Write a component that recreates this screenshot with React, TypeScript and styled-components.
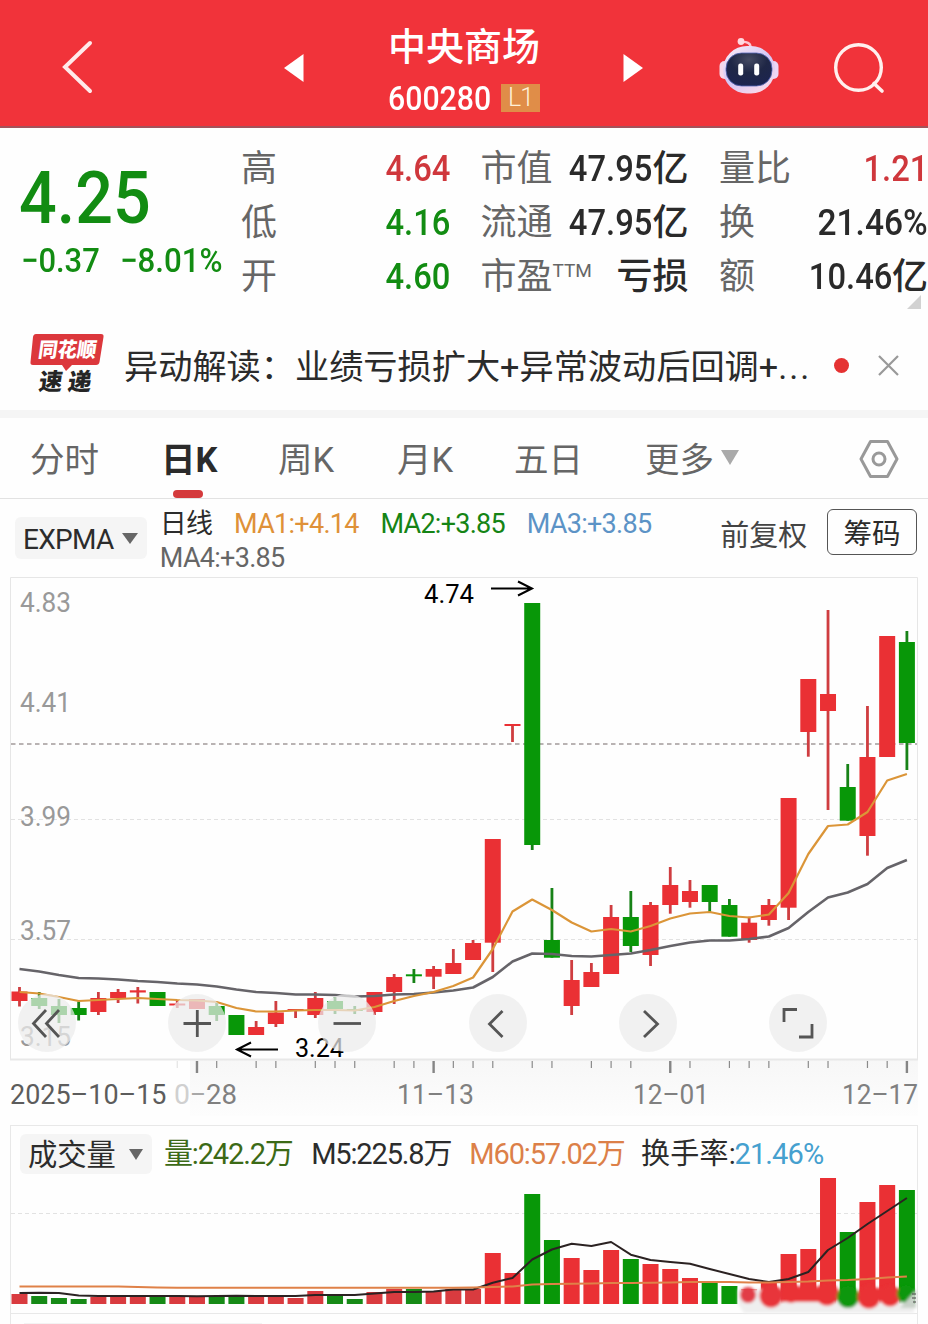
import React from 'react';
import styled, { createGlobalStyle, css } from 'styled-components';

const RED = '#ea3034';
const GREEN = '#089708';
const FONT = `Roboto, 'Noto Sans CJK SC', sans-serif`;

const Global = createGlobalStyle`
  * { box-sizing: border-box; }
  body { margin: 0; background: #fefefe; font-family: ${FONT}; color: #2c2c2c; }
`;

const Page = styled.main`
  width: 928px;
  height: 1324px;
  overflow: hidden;
  display: flex;
  flex-direction: column;
  background: #fefefe;
`;

/* digits set narrower than the family's own width */
const Narrow = styled.span<{ $k: number; $from?: 'left' | 'right' }>`
  display: inline-block;
  letter-spacing: 0;
  transform: scaleX(${(p) => p.$k});
  transform-origin: ${(p) => p.$from || 'left'} center;
`;

/* ---------- header ---------- */
const Header = styled.header`
  flex: none;
  height: 128px;
  background: #f1333a;
  border-bottom: 2px solid #a4525a;
  display: grid;
  grid-template-columns: 284px 20px 319px 20px 76px 59px 56px 94px;
  align-items: center;
  padding-top: 9px;
  svg { display: block; }
`;
const BackSlot = styled.div`
  padding: 0 0 2px 61px;
`;
const SearchSlot = styled.div`
  grid-column: 8;
`;
const RobotSlot = styled.div`
  grid-column: 6;
  padding-bottom: 4px;
`;
const TitleBlock = styled.div`
  padding: 13px 0 0 84px;
  display: flex;
  flex-direction: column;
`;
const StockName = styled.h1`
  margin: 0;
  font: 500 38px/48px ${FONT};
  color: #fff;
`;
const CodeLine = styled.div`
  display: flex;
  align-items: center;
  gap: 10px;
  height: 54px;
`;
const Code = styled.span`
  font: 500 34px/40px ${FONT};
  color: #fff;
  width: 103px;
  white-space: nowrap;
`;
const LevelTag = styled.span`
  width: 39px;
  height: 28px;
  background: #e08d48;
  color: #fff0d8;
  font: 300 25px/28px ${FONT};
  letter-spacing: -1px;
  text-align: center;
`;

/* ---------- quote ---------- */
const Quote = styled.section`
  flex: none;
  height: 196px;
  display: grid;
  grid-template-columns: 241px 687px;
  position: relative;
`;
const PriceBlock = styled.div`
  padding: 31px 0 0 19px;
  color: #128c12;
`;
const Price = styled.div`
  font: 500 73px/78px ${FONT};
`;
const Change = styled.div`
  display: grid;
  grid-template-columns: 99px auto;
  font: 500 34px/44px ${FONT};
  padding-left: 2px;
  margin-top: 1px;
  white-space: nowrap;
`;
const Stats = styled.dl`
  margin: 0;
  padding-top: 14px;
  display: grid;
  grid-template-columns: 209px 208px 209px;
  grid-template-rows: repeat(3, 54px);
  column-gap: 30.5px;
`;
const Stat = styled.div`
  display: flex;
  justify-content: space-between;
  align-items: center;
  white-space: nowrap;
`;
const StatLabel = styled.dt`
  font: 400 36px/54px ${FONT};
  color: #666;
  width: 74px;
  sup { font-size: 19px; font-weight: 400; line-height: 0; vertical-align: 12px; }
`;
const StatValue = styled.dd<{ $tone?: string }>`
  margin: 0;
  font: 500 37px/54px ${FONT};
  color: ${(p) => p.$tone || '#2a2a2a'};
  i { font-style: normal; font-size: 36px; }
`;
const Corner = styled.span`
  position: absolute;
  right: 7px;
  bottom: 15px;
  border-left: 14px solid transparent;
  border-bottom: 14px solid #d2d2d2;
`;

/* ---------- news ---------- */
const News = styled.section`
  flex: none;
  height: 94px;
  padding: 3px 29px 7px 29px;
  border-bottom: 8px solid #f5f5f5;
  display: flex;
  align-items: center;
  svg { display: block; flex: none; }
`;
const LogoSlot = styled.div`
  flex: none;
  padding-bottom: 4px;
`;
const NewsText = styled.p`
  margin: 4px 0 0 20px;
  width: 686px;
  font: 400 34.2px/50px ${FONT};
  color: #2b2b2b;
  white-space: nowrap;
  span { letter-spacing: 2px; }
`;
const Dot = styled.span`
  width: 15px;
  height: 15px;
  margin: 0 29px 0 24px;
  border-radius: 50%;
  background: #e53232;
  flex: none;
`;

/* ---------- tabs ---------- */
const Tabs = styled.nav`
  flex: none;
  height: 81px;
  padding: 0 30px 0 30px;
  border-bottom: 1px solid #e2e2e2;
  display: grid;
  grid-template-columns: 131px 117px 119px 117px 131px 213.5px 40px;
  align-items: stretch;
`;
const Tab = styled.button<{ $on?: boolean }>`
  border: 0;
  padding: 3px 0 0;
  background: none;
  display: flex;
  align-items: center;
  gap: 7px;
  position: relative;
  font: ${(p) => (p.$on ? 700 : 400)} 34.5px/50px ${FONT};
  color: ${(p) => (p.$on ? '#2b2b2b' : '#666')};
  ${(p) =>
    p.$on &&
    css`
      &::after {
        content: '';
        position: absolute;
        left: 12px;
        bottom: 0;
        width: 30px;
        height: 8px;
        border-radius: 4px;
        background: #d43a3c;
      }
    `}
`;
const Caret = styled.span<{ $w: number; $h: number; $c: string; $lift?: number }>`
  border: ${(p) => p.$w / 2}px solid transparent;
  border-bottom: 0;
  border-top: ${(p) => p.$h}px solid ${(p) => p.$c};
  margin-bottom: ${(p) => p.$lift || 0}px;
  flex: none;
`;
const GearSlot = styled.div`
  display: flex;
  align-items: center;
  padding-top: 2px;
`;

/* ---------- indicator bar ---------- */
const IndicatorBar = styled.section`
  flex: none;
  height: 78px;
  display: flex;
  padding: 0 11px 0 15px;
`;
const Picker = styled.button<{ $w: number; $h: number }>`
  flex: none;
  border: 0;
  border-radius: 6px;
  background: #f5f5f5;
  width: ${(p) => p.$w}px;
  height: ${(p) => p.$h}px;
  padding: 2px 9px 0 8px;
  display: flex;
  align-items: center;
  justify-content: space-between;
  white-space: nowrap;
  font: 400 28px/40px ${FONT};
  color: #2c2c2c;
`;
const PickerLatin = styled.span`
  letter-spacing: -0.7px;
  padding-top: 1px;
`;
const PickerHan = styled.span`
  font-size: 29.3px;
`;
const PickerSlot = styled.div`
  padding-top: 18px;
  width: 145px;
`;
const Legend = styled.div`
  width: 561px;
  padding-top: 8px;
  display: flex;
  flex-wrap: wrap;
  align-content: flex-start;
  column-gap: 21.7px;
`;
const LegendItem = styled.span<{ $c: string }>`
  font: 400 27px/34px ${FONT};
  letter-spacing: -0.72px;
  color: ${(p) => p.$c};
  white-space: nowrap;
`;
const Adjust = styled.span`
  font: 400 29px/44px ${FONT};
  color: #444;
  width: 107px;
  padding-top: 15px;
`;
const ChipButton = styled.button`
  width: 90px;
  height: 46px;
  margin-top: 10px;
  border: 1px solid #555;
  border-radius: 6px;
  background: none;
  font: 400 28.5px/42px ${FONT};
  color: #2a2a2a;
  padding: 4px 0 0;
`;

/* ---------- charts ---------- */
const ChartSection = styled.section`
  flex: none;
  position: relative;
  height: 548px;
  svg { display: block; }
`;
const Controls = styled.div`
  position: absolute;
  left: 18px;
  top: 417px;
  display: flex;
  gap: 92.2px;
`;
const RoundButton = styled.button`
  width: 58px;
  height: 58px;
  border: 0;
  padding: 0;
  border-radius: 50%;
  background: rgba(235, 235, 235, 0.72);
`;
const VolumeSection = styled.section`
  flex: none;
  height: 199px;
  display: flex;
  flex-direction: column;
  svg { display: block; }
`;
const VolumeHead = styled.div`
  height: 49px;
  margin: 0 10px;
  border: 1px solid #e8e8e8;
  border-bottom: 0;
  padding: 8px 0 0 9px;
  display: flex;
`;
const VolumeItem = styled.span<{ $c: string; $ml: number }>`
  margin-left: ${(p) => p.$ml}px;
  font: 400 29px/41px ${FONT};
  letter-spacing: -1.15px;
  color: ${(p) => p.$c};
  white-space: nowrap;
  b { font-weight: 400; color: #45a0cf; letter-spacing: -0.9px; }
  i { font-style: normal; letter-spacing: 0.2px; }
`;

/* index, open/close band and high/low band, in chart units */
type Candle = [dir: 'r' | 'g', top: number, bottom: number, high: number, low: number];
const candles: Candle[] = [
  ['r', 991.5, 1001, 987, 1006.5], ['g', 998, 1006, 992, 1009], ['g', 1006, 1015, 999, 1023],
  ['g', 1008, 1015, 1001.5, 1020.5], ['r', 998, 1012, 992, 1015], ['r', 992, 998, 989, 1003],
  ['r', 990.3, 992.5, 987, 1003.5], ['g', 992, 1006, 992, 1006], ['r', 1003.5, 1005.5, 1000, 1008],
  ['r', 999, 1009, 999, 1009], ['g', 1006, 1015, 1003, 1021], ['g', 1015, 1035, 1015, 1035],
  ['r', 1027, 1035, 1021, 1035], ['r', 1012.5, 1024, 1001, 1027], ['r', 1009, 1011, 1009, 1018],
  ['r', 998, 1015, 992, 1018], ['g', 1001, 1009, 997, 1014], ['g', 1009, 1011, 1006, 1014],
  ['r', 992, 1012, 992, 1015], ['r', 977, 992, 974, 1004], ['g', 974.3, 976.3, 969, 983],
  ['r', 969, 976.7, 966, 989], ['r', 963, 974, 949, 974], ['r', 943, 960, 940, 960],
  ['r', 839, 942.7, 839, 972], ['r', 724, 726, 724, 742], ['g', 603, 845, 603, 850],
  ['g', 940, 957.7, 888, 957.7], ['r', 980, 1006, 960, 1015], ['r', 972, 987, 963, 987],
  ['r', 917, 974, 905, 974], ['g', 917, 946, 891, 952], ['r', 905, 955, 902, 966],
  ['r', 885, 905, 867, 913.7], ['r', 891, 902, 880, 907.7], ['g', 885, 902, 885, 912],
  ['g', 905, 936.7, 899, 936.7], ['r', 922.7, 940, 916.7, 942.7], ['r', 905, 920, 899, 925.7],
  ['r', 798, 907.7, 798, 920], ['r', 679, 732, 679, 756.7], ['r', 694, 711, 610, 810],
  ['g', 787, 820.7, 764, 820.7], ['r', 757, 836, 706, 855.7], ['r', 636, 757, 636, 757],
  ['g', 642, 743, 631, 770],
];
const maFast = [992, 993.5, 997, 1001, 1000, 999, 998, 999, 1000, 1000.5, 1002, 1008, 1011.5, 1011.5, 1010.5, 1010, 1010, 1010.5, 1007, 1001, 996, 992, 986, 977.5, 949, 911.5, 899.5, 910, 922.5, 931.5, 929, 931.5, 926, 918.5, 913.5, 912, 916, 917.5, 914.5, 893, 854, 826, 824.5, 812, 780.5, 774];
const maSlow = [969, 971.5, 975, 978, 978.5, 979.5, 981, 982, 983.5, 984.5, 986.5, 989.5, 992, 993, 994.5, 994.5, 995, 996.5, 996, 994.5, 994, 992.5, 990.5, 987.5, 977, 961.5, 953.5, 954, 956, 956.5, 955, 953.5, 950, 946, 942.5, 940.5, 940.5, 939, 936.5, 928, 912, 897.5, 892.5, 884, 868, 860];
const volTops = [1294, 1296, 1298, 1299, 1297, 1297, 1297, 1296, 1297, 1297, 1297, 1295, 1297, 1297, 1298, 1291, 1295, 1299, 1292, 1289, 1289, 1291, 1289, 1289, 1253, 1273, 1194, 1240, 1258, 1270, 1250, 1259, 1264, 1269, 1278, 1282, 1286, 1289, 1282, 1254, 1249, 1178, 1232, 1202, 1185, 1190];
const volM5 = [1293, 1292.7, 1293, 1295.5, 1296, 1296, 1296, 1296, 1296, 1296.3, 1296, 1295.7, 1296, 1296, 1296, 1295, 1295, 1295, 1293.5, 1292, 1292, 1291.5, 1289.5, 1289.5, 1282.7, 1278, 1259.5, 1249.5, 1243.7, 1246, 1242, 1254.7, 1260, 1262, 1263.7, 1269, 1274, 1279, 1282, 1279, 1272, 1250, 1238, 1224, 1211, 1198];
const volM60 = [1286.5, 1286.5, 1286.5, 1286.5, 1286.5, 1286.5, 1287, 1287.5, 1287.7, 1287.7, 1287.7, 1287.7, 1287.7, 1287.7, 1287.7, 1287.7, 1287.7, 1287.7, 1287.7, 1287.7, 1287.7, 1287.7, 1287.7, 1287.5, 1287, 1286.5, 1284.5, 1284, 1283.7, 1283.5, 1283, 1283, 1282.7, 1282.5, 1282, 1282, 1282, 1282.5, 1282.5, 1282, 1281.5, 1280.5, 1280, 1279, 1277.5, 1276.5];

const cx = (i: number) => 19.5 + 19.72 * i;
const toPoints = (ys: number[]) => ys.map((y, i) => `${cx(i).toFixed(1)},${y}`).join(' ');

const priceLabels: [string, number][] = [['4.83', 611.5], ['4.41', 711.5], ['3.99', 825.5], ['3.57', 939.5], ['3.15', 1046]];
const ticks = [8, 10, 12, 13, 15, 16, 17, 19, 20, 22, 23, 24, 26, 27, 29, 30, 31, 34, 36, 37, 38, 40, 41, 43, 44];
const majorTicks = [9, 21, 33, 45];

const Fit = ({ x, y, w, size = 28, fill = '#808080', children }: { x: number; y: number; w: number; size?: number; fill?: string; children: string }) => (
  <text x={x} y={y} textLength={w} lengthAdjust="spacingAndGlyphs" fontSize={size} fill={fill} fontFamily="Roboto, sans-serif">
    {children}
  </text>
);

const PriceChart = () => (
  <svg width="928" height="548" viewBox="0 577 928 548">
    <defs>
      <linearGradient id="axisShade" x1="0" y1="0" x2="0" y2="1">
        <stop offset="0" stopColor="#f7f7f7" />
        <stop offset="1" stopColor="#fdfdfd" />
      </linearGradient>
    </defs>
    <rect x="190" y="1060" width="728" height="56" fill="url(#axisShade)" />
    <path d="M10.5 1059.5V577.5H917.5V1059.5" fill="none" stroke="#e6e6e6" />
    <path d="M10 1059.5H918" stroke="#e8e8e8" strokeWidth="2" />
    <path d="M11 819.5H917M11 939.5H917" stroke="#e2e2e2" strokeDasharray="4 3" />
    {priceLabels.map(([t, y]) => (
      <Fit key={t} x={20} y={y} w={51} fill="#999">{t}</Fit>
    ))}
    <path d="M11 744H917" stroke="#a39a9a" strokeWidth="1.4" strokeDasharray="4.5 3.5" />
    {candles.map(([d, t, b, h, l], i) => (
      <g key={i} fill={d === 'r' ? RED : GREEN}>
        <rect x={cx(i) - 1.4} y={h} width="2.8" height={l - h} fill={d === 'r' ? '#cf3d40' : '#178217'} />
        <rect x={cx(i) - 8} y={t} width="16" height={b - t} />
      </g>
    ))}
    <polyline points={toPoints(maSlow)} fill="none" stroke="#666469" strokeWidth="2.6" strokeLinejoin="round" />
    <polyline points={toPoints(maFast)} fill="none" stroke="#db9538" strokeWidth="2.2" strokeLinejoin="round" />
    <Fit x={424} y={603} w={50} size={26} fill="#000">4.74</Fit>
    <path d="M491 588.5H532M518 581.5L532 588.5L518 595.5" fill="none" stroke="#000" strokeWidth="2" />
    <Fit x={295} y={1057} w={49} size={26} fill="#000">3.24</Fit>
    <path d="M278 1049.5H237M251 1042.5L237 1049.5L251 1056.5" fill="none" stroke="#000" strokeWidth="2" />
    {ticks.map((i) => (
      <path key={i} d={`M${cx(i)} 1061V1068`} stroke={i === 8 ? '#e4e4e4' : '#8a8a8a'} strokeWidth="1.2" />
    ))}
    {majorTicks.map((i) => (
      <path key={i} d={`M${cx(i)} 1061V1073`} stroke="#858585" strokeWidth="2.4" />
    ))}
    <Fit x={10} y={1104} w={156.5} fill="#5c5c5c">2025–10–15</Fit>
    <Fit x={174} y={1104} w={16} fill="#d0d0d0">0</Fit>
    <Fit x={190} y={1104} w={16} fill="#a8a8a8">–</Fit>
    <Fit x={206} y={1104} w={31}>28</Fit>
    <Fit x={397} y={1104} w={77}>11–13</Fit>
    <Fit x={633} y={1104} w={76}>12–01</Fit>
    <Fit x={842} y={1104} w={76}>12–17</Fit>
  </svg>
);

const smudges: [number, number, number, string][] = [
  [748, 1295, 8, '#e23c46'], [771, 1296, 11.5, '#e8353a'], [791, 1293, 10, RED], [808, 1292, 10, RED], [827, 1294, 11.5, RED],
  [848, 1297, 11, GREEN], [869, 1297, 11.5, RED], [890, 1296, 10.5, RED], [906, 1294, 9, GREEN],
];

const VolumeChart = () => (
  <svg width="928" height="150" viewBox="0 1174 928 150">
    <defs>
      <filter id="soft" x="-20%" y="-80%" width="140%" height="260%">
        <feGaussianBlur stdDeviation="1.6" />
      </filter>
    </defs>
    <path d="M10.5 1174V1324M917.5 1174V1324M10 1313.5H918" stroke="#e8e8e8" />
    <path d="M11 1213.5H917" stroke="#e2e2e2" strokeDasharray="4 3" />
    {volTops.map((t, i) => (
      <rect key={i} x={cx(i) - 8} y={t} width="16" height={1304 - t} fill={candles[i][0] === 'r' ? (i < 24 ? '#d93b3f' : RED) : (i < 24 ? '#168a16' : GREEN)} />
    ))}
    <g filter="url(#soft)">
      <path d="M738 1289H762V1302H914V1313H744L738 1304Z" fill="#efefef" />
      <path d="M783 1288H836V1302H783Z" fill={RED} />
      <path d="M862 1288H898V1299H862Z" fill={RED} />
      {smudges.map(([x, y, r, c]) => (
        <ellipse key={x} cx={x} cy={y} rx={r} ry={r} fill={c} />
      ))}
      <path d="M916 1290V1308H900Z" fill="#c9d2c9" />
    </g>
    <path d="M912 1294h4M912 1298h4M913 1302h3" stroke="#444" strokeWidth="1" />
    <polyline points={toPoints(volM5)} fill="none" stroke="#2b2222" strokeWidth="2" strokeLinejoin="round" />
    <polyline points={toPoints(volM60)} fill="none" stroke="#df8148" strokeWidth="2" strokeLinejoin="round" />
    <rect x="24" y="1323" width="238" height="1" fill="#f3f3f3" />
  </svg>
);

const Robot = () => (
  <svg width="60" height="58" viewBox="0 0 60 58">
    <defs>
      <linearGradient id="shell" x1="0" y1="0" x2="0.7" y2="1">
        <stop offset="0" stopColor="#fff0f6" />
        <stop offset="0.55" stopColor="#d3c6f5" />
        <stop offset="1" stopColor="#f9d9ea" />
      </linearGradient>
      <radialGradient id="visor" cx="0.5" cy="0.2" r="0.8">
        <stop offset="0" stopColor="#454b63" />
        <stop offset="0.5" stopColor="#1f2746" />
        <stop offset="1" stopColor="#1c2450" />
      </radialGradient>
    </defs>
    <path d="M31.500 10C31.500 6 28 4.500 22 5" fill="none" stroke="#ffc4d0" strokeWidth="2.400" />
    <circle cx="22" cy="4.500" r="3.400" fill="#ffd9e0" />
    <rect x="0.500" y="24" width="10" height="18" rx="5" fill="#f6d8ea" />
    <rect x="49.500" y="24" width="10" height="18" rx="5" fill="#ecd6f6" />
    <rect x="4" y="9" width="52" height="47.500" rx="24" fill="url(#shell)" />
    <rect x="7" y="16" width="46" height="33" rx="15.500" fill="url(#visor)" stroke="#5468b8" strokeWidth="0.800" />
    <rect x="19.200" y="26.500" width="5" height="12" rx="2.200" fill="#fff" />
    <rect x="35.200" y="26.500" width="5" height="12" rx="2.200" fill="#fff" />
  </svg>
);

const ThsLogo = () => (
  <svg width="75" height="62" viewBox="0 0 75 62" overflow="visible">
    <path d="M7 2H72Q75 2 74.500 5L70.500 30Q70 33 67 33H43L37 39L33 33H4Q1 33 1.500 30L4 5Q4.500 2 7 2Z" fill="#dc373c" />
    <g fontFamily="'Noto Sans CJK SC', sans-serif" fontWeight="900">
      <text transform="translate(8.500 25) skewX(-8)" fontSize="20.500" textLength="58" lengthAdjust="spacingAndGlyphs" fill="#fff">同花顺</text>
      <text transform="translate(9 58) skewX(-8)" fontSize="23.500" fill="#252525">速</text>
      <text transform="translate(38 58) skewX(-8)" fontSize="23.500" fill="#252525">递</text>
    </g>
  </svg>
);

const strokes = { fill: 'none', stroke: '#555', strokeWidth: 2.8 } as const;
const controls: [string, React.ReactNode][] = [
  ['快退', <path key="p" d="M28 16L15.500 29.500L28 43M41 16L28.500 29.500L41 43" {...strokes} />],
  ['放大', <path key="p" d="M15.500 29.500H43M29.300 16V43" {...strokes} />],
  ['缩小', <path key="p" d="M15.500 29.500H43" {...strokes} />],
  ['左移', <path key="p" d="M33.500 17L20.500 30L33.500 43" {...strokes} />],
  ['右移', <path key="p" d="M25 17L38.500 30L25 43" {...strokes} />],
  ['全屏', <path key="p" d="M15 28V15.500H28M43 30V43H30" {...strokes} />],
];

const num = (text: string, k = 0.885) => <Narrow $k={k} $from="right">{text}</Narrow>;
const stats: { label: React.ReactNode; value: React.ReactNode; tone?: string }[] = [
  { label: '高', value: num('4.64'), tone: '#cf373c' },
  { label: '市值', value: <>{num('47.95')}<i>亿</i></> },
  { label: '量比', value: num('1.21'), tone: '#cf373c' },
  { label: '低', value: num('4.16'), tone: '#128c12' },
  { label: '流通', value: <>{num('47.95')}<i>亿</i></> },
  { label: '换', value: num('21.46%', 0.905) },
  { label: '开', value: num('4.60'), tone: '#128c12' },
  { label: <>市盈<sup>TTM</sup></>, value: <i>亏损</i> },
  { label: '额', value: <>{num('10.46')}<i>亿</i></> },
];

export default function App() {
  return (
    <Page>
      <Global />
      <Header>
        <BackSlot>
          <svg width="34" height="54" viewBox="0 0 34 54"><path d="M29 3L4 27L29 51" fill="none" stroke="#ffeaea" strokeWidth="4" strokeLinecap="round" /></svg>
        </BackSlot>
        <svg width="20" height="30" viewBox="0 0 20 30"><path d="M19.500 1V29L0 15Z" fill="#fff" /></svg>
        <TitleBlock>
          <StockName>中央商场</StockName>
          <CodeLine>
            <Code><Narrow $k={0.89}>600280</Narrow></Code>
            <LevelTag>L1</LevelTag>
          </CodeLine>
        </TitleBlock>
        <svg width="20" height="30" viewBox="0 0 20 30"><path d="M0.500 1V29L20 15Z" fill="#fff" /></svg>
        <RobotSlot><Robot /></RobotSlot>
        <SearchSlot>
          <svg width="52" height="52" viewBox="0 0 52 52">
            <circle cx="24.500" cy="25.500" r="22.800" fill="none" stroke="#fff0ee" strokeWidth="3.400" />
            <path d="M40 41.500L48 49" stroke="#fff0ee" strokeWidth="3.600" strokeLinecap="round" />
          </svg>
        </SearchSlot>
      </Header>

      <Quote>
        <PriceBlock>
          <Price><Narrow $k={0.91}>4.25</Narrow></Price>
          <Change>
            <Narrow $k={0.91}>−0.37</Narrow>
            <Narrow $k={0.92}>−8.01%</Narrow>
          </Change>
        </PriceBlock>
        <Stats>
          {stats.map((s, i) => (
            <Stat key={i}>
              <StatLabel>{s.label}</StatLabel>
              <StatValue $tone={s.tone}>{s.value}</StatValue>
            </Stat>
          ))}
        </Stats>
        <Corner />
      </Quote>

      <News>
        <LogoSlot><ThsLogo /></LogoSlot>
        <NewsText>异动解读：业绩亏损扩大+异常波动后回调+<span>...</span></NewsText>
        <Dot />
        <svg width="21" height="21" viewBox="0 0 21 21"><path d="M1 1L20 20M20 1L1 20" stroke="#999" strokeWidth="2.200" /></svg>
      </News>

      <Tabs>
        <Tab>分时</Tab>
        <Tab $on>日K</Tab>
        <Tab>周K</Tab>
        <Tab>月K</Tab>
        <Tab>五日</Tab>
        <Tab>更多<Caret $w={19} $h={15} $c="#aaa" $lift={5} /></Tab>
        <GearSlot>
          <svg width="40" height="40" viewBox="0 0 40 40" fill="none" stroke="#999" strokeWidth="3">
            <path d="M11.500 2.500H28.500L38 20L28.500 37.500H11.500L2 20Z" strokeLinejoin="round" />
            <circle cx="20" cy="20" r="6" />
          </svg>
        </GearSlot>
      </Tabs>

      <IndicatorBar>
        <PickerSlot>
          <Picker $w={132} $h={42}><PickerLatin>EXPMA</PickerLatin><Caret $w={16} $h={11} $c="#666" $lift={2} /></Picker>
        </PickerSlot>
        <Legend>
          <LegendItem $c="#2c2c2c">日线</LegendItem>
          <LegendItem $c="#df9138">MA1:+4.14</LegendItem>
          <LegendItem $c="#158415">MA2:+3.85</LegendItem>
          <LegendItem $c="#5c93c6">MA3:+3.85</LegendItem>
          <LegendItem $c="#666">MA4:+3.85</LegendItem>
        </Legend>
        <Adjust>前复权</Adjust>
        <ChipButton>筹码</ChipButton>
      </IndicatorBar>

      <ChartSection>
        <PriceChart />
        <Controls>
          {controls.map(([name, icon]) => (
            <RoundButton key={name} aria-label={name}>
              <svg width="58" height="58" viewBox="0 0 58 58">{icon}</svg>
            </RoundButton>
          ))}
        </Controls>
      </ChartSection>

      <VolumeSection>
        <VolumeHead>
          <Picker $w={132} $h={40}><PickerHan>成交量</PickerHan><Caret $w={15} $h={11} $c="#666" $lift={2} /></Picker>
          <VolumeItem $c="#3c6a16" $ml={12}>量:242.2万</VolumeItem>
          <VolumeItem $c="#2c2c2c" $ml={18.5}>M5:225.8万</VolumeItem>
          <VolumeItem $c="#dc8048" $ml={18}>M60:57.02万</VolumeItem>
          <VolumeItem $c="#2c2c2c" $ml={16.5}><i>换手率</i>:<b>21.46%</b></VolumeItem>
        </VolumeHead>
        <VolumeChart />
      </VolumeSection>
    </Page>
  );
}
